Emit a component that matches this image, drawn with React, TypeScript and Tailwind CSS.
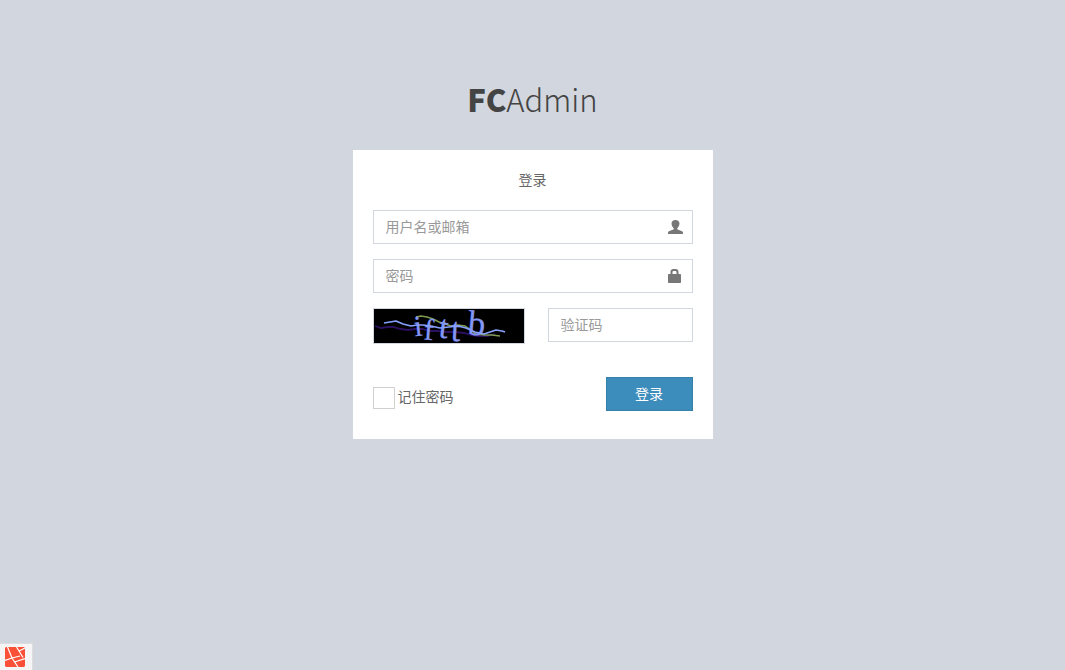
import React, { useState } from 'react';

const field =
  'h-[34px] w-full min-w-0 rounded-none border border-[#d2d6de] bg-white px-3 pb-0.5 text-sm text-[#555] outline-none placeholder:text-[#999] focus:border-[#3c8dbc]';

function UserIcon() {
  return (
    <svg viewBox="0 0 14 14" className="h-3.5 w-[15px]" preserveAspectRatio="none" fill="#777" aria-hidden="true">
      <path d="M7 0C4.700 0 3.300 1.400 3.300 3.500c0 1.900.8 3.500 1.800 4.400.4.400.4 1.200-.1 1.500L1.400 11C.5 11.400 0 12 0 12.800V14h14v-1.200c0-.8-.5-1.400-1.400-1.800L9 9.400c-.5-.3-.5-1.100-.1-1.500 1-.9 1.800-2.500 1.800-4.400C10.700 1.400 9.300 0 7 0Z" />
    </svg>
  );
}

function LockIcon() {
  return (
    <svg viewBox="0 0 15 14" className="h-3.5 w-[15px]" fill="#777" aria-hidden="true">
      <path
        fillRule="evenodd"
        d="M2.500 5V2.800C2.500 1.200 3.600 0 5.200 0h2.600c1.600 0 2.700 1.200 2.700 2.800V5H12c.6 0 1 .4 1 1v7c0 .6-.4 1-1 1H1c-.6 0-1-.4-1-1V6c0-.6.4-1 1-1h1.500Zm2 0h4V3.200c0-.7-.5-1.200-1.200-1.200H5.700c-.7 0-1.200.5-1.200 1.200V5Z"
      />
    </svg>
  );
}

function Captcha() {
  return (
    <svg
      viewBox="0 0 150 34"
      className="block h-9 w-[152px] shrink-0 overflow-visible border border-[#d2d6de] bg-black"
      role="img"
      aria-label="验证码图片"
    >
      <path
        d="M1 17l6 2 6-1 6 0 8 2 7 1 7-1 7 0 8 2 8 0 8 1 9 0 9 1 8 2 6 1h9l8-2"
        fill="none"
        stroke="#2c1060"
        strokeWidth="1.800"
      />
      <path
        d="M42 8l5-1 6 1 6 2 6 3 6 2 6 2 7-1 7 1 6 4 5 4 9 1 7 0 8 1"
        fill="none"
        stroke="#7e9b50"
        strokeWidth="1.400"
      />
      <g
        fill="#8497f5"
        stroke="#8497f5"
        strokeWidth=".3"
        fontFamily="Liberation Serif, serif"
      >
        <text x="40" y="27" fontSize="29" transform="rotate(-6 44 18)">i</text>
        <text x="50" y="31" fontSize="30" transform="rotate(4 56 20)">f</text>
        <text x="65" y="29" fontSize="33" transform="rotate(7 70 20)">t</text>
        <text x="77" y="32" fontSize="34" transform="rotate(3 81 20)">t</text>
        <text x="94" y="26" fontSize="35" transform="rotate(5 102 14)">b</text>
      </g>
      <path
        d="M10 14l6-1 6-1 7 3 8 2 6-1 6 0 8 1 9 2 9-1 9-1 8 2 9 4 9 2 6-2 6-2 6 1 3 1"
        fill="none"
        stroke="#87a0ff"
        strokeWidth="1.700"
        strokeLinejoin="round"
      />
    </svg>
  );
}

function DebugBadge() {
  return (
    <button
      type="button"
      aria-label="调试栏"
      className="fixed bottom-0 left-0 flex h-[27px] w-[33px] items-center border-t border-r border-[#ddd] bg-[#f5f5f5] pl-[5px]"
    >
      <svg viewBox="0 0 20 20" className="h-5 w-5" aria-hidden="true">
        <path d="M1 0h18l1 1v18l-1 1H1l-1-1V1Z" fill="#fa5038" />
        <path
          d="M2.500 0 7 11l6 9M0 13.500 7 11l8-2M11.500 0 14 4l6-3M14 4l4 6.500M9.500 15 20 11.500"
          fill="none"
          stroke="#fff"
          strokeWidth="1.200"
        />
      </svg>
    </button>
  );
}

export default function App() {
  const [remember, setRemember] = useState(false);

  return (
    <div className="min-h-screen bg-[#d2d6de] px-4 pt-[75px] pb-10 font-['Noto_Sans_CJK_SC',sans-serif] text-sm leading-5 text-[#666]">
      <main className="mx-auto w-full max-w-[360px]">
        <h1 className="mb-[27px] text-center text-[31px] leading-[48px] font-light text-[#444]">
          <a href="#">
            <b className="font-black">FC</b>Admin
          </a>
        </h1>

        <form className="bg-white px-5 pt-5 pb-7" onSubmit={(e) => e.preventDefault()}>
          <p className="mb-[22px] text-center leading-[18px]">登录</p>

          <div className="flex flex-col gap-[15px]">
            <div className="relative">
              <input className={field} type="text" placeholder="用户名或邮箱" aria-label="用户名或邮箱" />
              <span className="pointer-events-none absolute inset-y-0 right-2.5 flex items-center">
                <UserIcon />
              </span>
            </div>
            <div className="relative">
              <input className={field} type="password" placeholder="密码" aria-label="密码" />
              <span className="pointer-events-none absolute inset-y-0 right-2.5 flex items-center">
                <LockIcon />
              </span>
            </div>
            <div className="flex items-start justify-between gap-[23px]">
              <Captcha />
              <input className={field} type="text" placeholder="验证码" aria-label="验证码" />
            </div>
          </div>

          <div className="mt-[33px] flex items-start justify-between">
            <label className="mt-2.5 flex items-start gap-[3px] leading-[18px]">
              <input
                type="checkbox"
                checked={remember}
                onChange={(e) => setRemember(e.target.checked)}
                className="h-[22px] w-[22px] appearance-none border border-[#d0d0cc] bg-white checked:bg-[#3c8dbc]"
              />
              记住密码
            </label>
            <button
              type="submit"
              className="h-[34px] w-[87px] border border-[#367fa9] bg-[#3c8dbc] pb-0.5 text-white hover:bg-[#367fa9]"
            >
              登录
            </button>
          </div>
        </form>
      </main>

      <DebugBadge />
    </div>
  );
}
